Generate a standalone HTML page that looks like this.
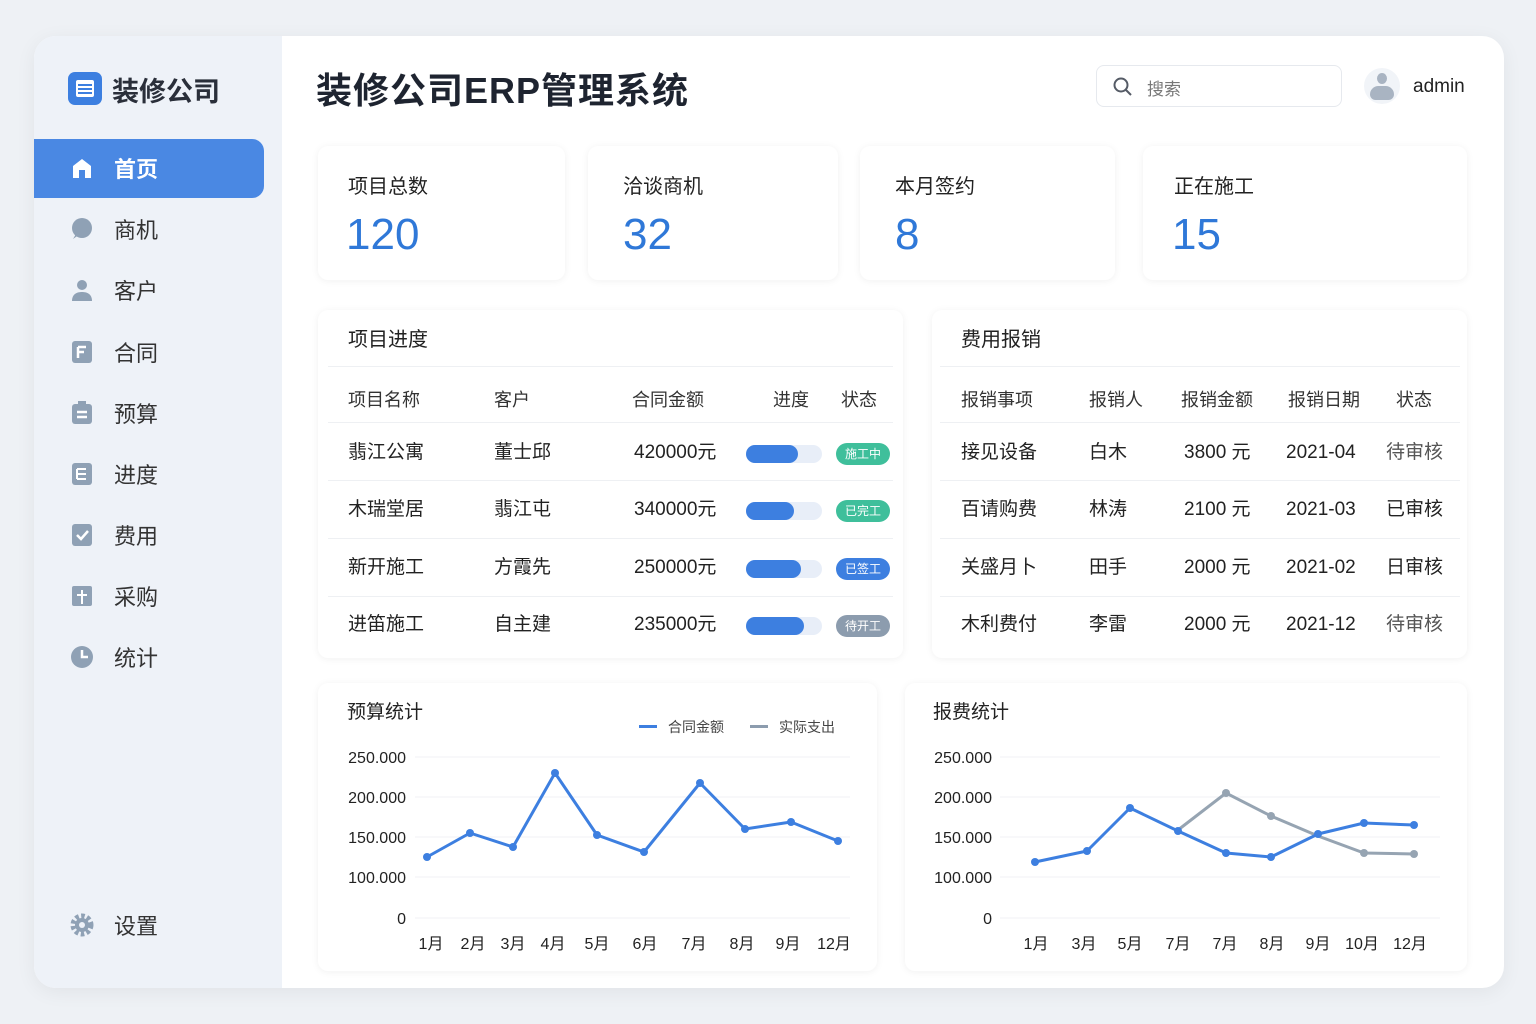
<!DOCTYPE html>
<html><head><meta charset="utf-8"><style>
*{margin:0;padding:0;box-sizing:border-box}
body{width:1536px;height:1024px;background:#eef1f5;font-family:"Liberation Sans","Noto Sans CJK SC",sans-serif;color:#222;position:relative;overflow:hidden}
.a{position:absolute}
.card{position:absolute;left:34px;top:36px;width:1470px;height:952px;background:#fff;border-radius:22px;box-shadow:0 4px 20px rgba(0,0,0,.06);overflow:hidden}
.side{position:absolute;left:0;top:0;width:248px;height:952px;background:#eef2f8}
.nav{position:absolute;left:0;width:230px;height:58px;font-size:22px;color:#333;display:flex;align-items:center}
.nav .ic{position:absolute;left:36px;top:17px;width:24px;height:24px}
.nav span{position:absolute;left:80px}
.box{position:absolute;background:#fff;border-radius:10px;box-shadow:0 1px 8px rgba(0,0,0,.06)}
.lbl{position:absolute;font-size:20px;color:#222}
.num{position:absolute;font-size:44px;color:#2f78d8;font-weight:500}
.t{position:absolute;font-size:19px;color:#222;white-space:nowrap;line-height:24px}
.h{position:absolute;font-size:18px;color:#333;white-space:nowrap}
.bar{position:absolute;width:76px;height:18px;border-radius:9px;background:#e8eef8}
.bar i{display:block;height:18px;border-radius:9px;background:#3d7fe0}
.tag{position:absolute;width:54px;height:22px;border-radius:11px;color:#fff;font-size:12px;text-align:center;line-height:22px}
.line{position:absolute;height:1px;background:#eef0f3}
</style></head><body>
<div class="card">
 <div class="side">
  <div class="a" style="left:34px;top:36px;width:34px;height:33px;border-radius:7px;background:#3c7fe0">
   <div class="a" style="left:8px;top:8px;width:18px;height:17px;border:2px solid #fff;border-radius:2px;background:repeating-linear-gradient(#fff 0 2px,transparent 2px 4px)"></div></div>
  <div class="a" style="left:78px;top:34px;font-size:27px;font-weight:600;color:#2a2f3a">装修公司</div>
  <div class="a" style="left:0;top:103px;width:230px;height:59px;background:#4a88e3;border-radius:0 12px 12px 0"></div>
  <div class="nav" style="top:103px;color:#fff;font-weight:700"><svg class="ic" viewBox="0 0 24 24"><path d="M3 10L12 3L21 10V22H15V14H9V22H3Z" fill="#fff"/></svg><span>首页</span></div>
  <div class="nav" style="top:164px"><svg class="ic" viewBox="0 0 24 24"><circle cx="12" cy="11" r="10" fill="#8fa1b5"/><path d="M3 22l3-5h4z" fill="#8fa1b5"/></svg><span>商机</span></div>
  <div class="nav" style="top:225px"><svg class="ic" viewBox="0 0 24 24"><circle cx="12" cy="7" r="5" fill="#8fa1b5"/><path d="M2 23c0-7 5-9 10-9s10 2 10 9z" fill="#8fa1b5"/></svg><span>客户</span></div>
  <div class="nav" style="top:287px"><svg class="ic" viewBox="0 0 24 24"><rect x="2" y="1" width="20" height="22" rx="3" fill="#8fa1b5"/><path d="M8 7h8M8 12h6M8 7v11" stroke="#fff" stroke-width="2.5"/></svg><span>合同</span></div>
  <div class="nav" style="top:348px"><svg class="ic" viewBox="0 0 24 24"><rect x="2" y="3" width="20" height="20" rx="3" fill="#8fa1b5"/><rect x="8" y="0" width="8" height="5" fill="#8fa1b5"/><path d="M7 11h10M7 16h10" stroke="#fff" stroke-width="2.5"/></svg><span>预算</span></div>
  <div class="nav" style="top:409px"><svg class="ic" viewBox="0 0 24 24"><rect x="2" y="1" width="20" height="22" rx="3" fill="#8fa1b5"/><path d="M7 7h9M7 12h9M7 17h9M7 7v10" stroke="#fff" stroke-width="2"/></svg><span>进度</span></div>
  <div class="nav" style="top:470px"><svg class="ic" viewBox="0 0 24 24"><rect x="2" y="1" width="20" height="22" rx="3" fill="#8fa1b5"/><path d="M7 12l4 4 7-8" stroke="#fff" stroke-width="2.5" fill="none"/></svg><span>费用</span></div>
  <div class="nav" style="top:531px"><svg class="ic" viewBox="0 0 24 24"><rect x="2" y="2" width="20" height="20" rx="2" fill="#8fa1b5"/><path d="M12 6v14M7 11h10" stroke="#fff" stroke-width="2"/></svg><span>采购</span></div>
  <div class="nav" style="top:592px"><svg class="ic" viewBox="0 0 24 24"><circle cx="12" cy="12" r="11" fill="#8fa1b5"/><path d="M12 5v7h6" stroke="#fff" stroke-width="2.5" fill="none"/></svg><span>统计</span></div>
  <div class="nav" style="top:860px"><svg class="ic" viewBox="0 0 24 24"><circle cx="12" cy="12" r="9" fill="none" stroke="#8fa1b5" stroke-width="5" stroke-dasharray="3.5 2.4"/><circle cx="12" cy="12" r="7" fill="#8fa1b5"/><circle cx="12" cy="12" r="3" fill="#eef2f8"/></svg><span>设置</span></div>
 </div>
 <div class="a" style="left:282px;top:26px;font-size:36px;font-weight:700;color:#1e2430;letter-spacing:1px">装修公司ERP管理系统</div>
 <div class="a" style="left:1062px;top:29px;width:246px;height:42px;border:1px solid #e6e9ee;border-radius:8px">
  <svg class="a" style="left:16px;top:11px" width="20" height="20" viewBox="0 0 20 20"><circle cx="8" cy="8" r="6.5" fill="none" stroke="#555b66" stroke-width="2"/><path d="M13 13l5 5" stroke="#555b66" stroke-width="2"/></svg>
  <div class="a" style="left:50px;top:9px;font-size:17px;color:#777">搜索</div></div>
 <div class="a" style="left:1330px;top:32px;width:36px;height:36px;border-radius:50%;background:#f1f4f8;overflow:hidden">
  <div class="a" style="left:13px;top:5px;width:10px;height:11px;border-radius:50%;background:#a9b4c2"></div>
  <div class="a" style="left:6px;top:18px;width:24px;height:14px;border-radius:12px 12px 8px 8px;background:#a9b4c2"></div></div>
 <div class="a" style="left:1379px;top:40px;font-size:19px;color:#222">admin</div>

 <div class="box" style="left:284px;top:110px;width:247px;height:134px"><div class="lbl" style="left:30px;top:24px">项目总数</div><div class="num" style="left:28px;top:64px">120</div></div>
 <div class="box" style="left:554px;top:110px;width:250px;height:134px"><div class="lbl" style="left:35px;top:24px">洽谈商机</div><div class="num" style="left:35px;top:64px">32</div></div>
 <div class="box" style="left:826px;top:110px;width:255px;height:134px"><div class="lbl" style="left:35px;top:24px">本月签约</div><div class="num" style="left:35px;top:64px">8</div></div>
 <div class="box" style="left:1109px;top:110px;width:324px;height:134px"><div class="lbl" style="left:31px;top:24px">正在施工</div><div class="num" style="left:29px;top:64px">15</div></div>

 <div class="box" style="left:284px;top:274px;width:585px;height:348px">
  <div class="t" style="left:30px;top:18px;font-size:20px">项目进度</div>
  <div class="line" style="left:10px;top:56px;width:565px"></div>
  <div class="h" style="left:30px;top:76px">项目名称</div><div class="h" style="left:176px;top:76px">客户</div><div class="h" style="left:314px;top:76px">合同金额</div><div class="h" style="left:455px;top:76px">进度</div><div class="h" style="left:523px;top:76px">状态</div>
  <div class="line" style="left:10px;top:112px;width:565px"></div>
  <div class="t" style="left:30px;top:131px">翡江公寓</div><div class="t" style="left:176px;top:131px">董士邱</div><div class="t" style="left:316px;top:131px">420000元</div>
  <div class="bar" style="left:428px;top:135px"><i style="width:52px"></i></div><div class="tag" style="left:518px;top:133px;background:#3fbf9b">施工中</div>
  <div class="line" style="left:10px;top:170px;width:565px"></div>
  <div class="t" style="left:30px;top:188px">木瑞堂居</div><div class="t" style="left:176px;top:188px">翡江屯</div><div class="t" style="left:316px;top:188px">340000元</div>
  <div class="bar" style="left:428px;top:192px"><i style="width:48px"></i></div><div class="tag" style="left:518px;top:190px;background:#3fbf9b">已完工</div>
  <div class="line" style="left:10px;top:228px;width:565px"></div>
  <div class="t" style="left:30px;top:246px">新开施工</div><div class="t" style="left:176px;top:246px">方霞先</div><div class="t" style="left:316px;top:246px">250000元</div>
  <div class="bar" style="left:428px;top:250px"><i style="width:55px"></i></div><div class="tag" style="left:518px;top:248px;background:#3d7fe0">已签工</div>
  <div class="line" style="left:10px;top:286px;width:565px"></div>
  <div class="t" style="left:30px;top:303px">进笛施工</div><div class="t" style="left:176px;top:303px">自主建</div><div class="t" style="left:316px;top:303px">235000元</div>
  <div class="bar" style="left:428px;top:307px"><i style="width:58px"></i></div><div class="tag" style="left:518px;top:305px;background:#8c9cae">待开工</div>
 </div>

 <div class="box" style="left:898px;top:274px;width:535px;height:348px">
  <div class="t" style="left:29px;top:18px;font-size:20px">费用报销</div>
  <div class="line" style="left:8px;top:56px;width:520px"></div>
  <div class="h" style="left:29px;top:76px">报销事项</div><div class="h" style="left:157px;top:76px">报销人</div><div class="h" style="left:249px;top:76px">报销金额</div><div class="h" style="left:356px;top:76px">报销日期</div><div class="h" style="left:464px;top:76px">状态</div>
  <div class="line" style="left:8px;top:112px;width:520px"></div>
  <div class="t" style="left:29px;top:131px">接见设备</div><div class="t" style="left:157px;top:131px">白木</div><div class="t" style="left:252px;top:131px">3800 元</div><div class="t" style="left:354px;top:131px">2021-04</div><div class="t" style="left:454px;top:131px;color:#555">待审核</div>
  <div class="line" style="left:8px;top:170px;width:520px"></div>
  <div class="t" style="left:29px;top:188px">百请购费</div><div class="t" style="left:157px;top:188px">林涛</div><div class="t" style="left:252px;top:188px">2100 元</div><div class="t" style="left:354px;top:188px">2021-03</div><div class="t" style="left:454px;top:188px">已审核</div>
  <div class="line" style="left:8px;top:228px;width:520px"></div>
  <div class="t" style="left:29px;top:246px">关盛月卜</div><div class="t" style="left:157px;top:246px">田手</div><div class="t" style="left:252px;top:246px">2000 元</div><div class="t" style="left:354px;top:246px">2021-02</div><div class="t" style="left:454px;top:246px">日审核</div>
  <div class="line" style="left:8px;top:286px;width:520px"></div>
  <div class="t" style="left:29px;top:303px">木利费付</div><div class="t" style="left:157px;top:303px">李雷</div><div class="t" style="left:252px;top:303px">2000 元</div><div class="t" style="left:354px;top:303px">2021-12</div><div class="t" style="left:454px;top:303px;color:#555">待审核</div>
 </div>

 <div class="box" style="left:284px;top:647px;width:559px;height:288px">
  <div class="t" style="left:29px;top:18px;font-size:19px">预算统计</div>
  <div class="a" style="left:321px;top:42px;width:18px;height:3px;background:#3d7fe0"></div><div class="a" style="left:350px;top:34px;font-size:14px;color:#444">合同金额</div>
  <div class="a" style="left:432px;top:42px;width:18px;height:3px;background:#8c9cae"></div><div class="a" style="left:461px;top:34px;font-size:14px;color:#444">实际支出</div>
 </div>
 <div class="box" style="left:871px;top:647px;width:562px;height:288px">
  <div class="t" style="left:28px;top:18px;font-size:19px">报费统计</div>
 </div>
 <svg class="a" style="left:0;top:0" width="1470" height="952" font-family="Liberation Sans,Noto Sans CJK SC,sans-serif" font-size="16" fill="#222">
  <g transform="translate(-34,-36)">
   <g stroke="#f0f2f5"><path d="M415 757H850M415 797H850M415 837H850M415 877H850M415 918H850M1000 757H1440M1000 797H1440M1000 837H1440M1000 877H1440M1000 918H1440"/></g>
   <g text-anchor="end"><text x="406" y="763">250.000</text><text x="406" y="803">200.000</text><text x="406" y="843">150.000</text><text x="406" y="883">100.000</text><text x="406" y="924">0</text>
   <text x="992" y="763">250.000</text><text x="992" y="803">200.000</text><text x="992" y="843">150.000</text><text x="992" y="883">100.000</text><text x="992" y="924">0</text></g>
   <g text-anchor="middle"><text x="431" y="949">1月</text><text x="473" y="949">2月</text><text x="513" y="949">3月</text><text x="553" y="949">4月</text><text x="597" y="949">5月</text><text x="645" y="949">6月</text><text x="694" y="949">7月</text><text x="742" y="949">8月</text><text x="788" y="949">9月</text><text x="834" y="949">12月</text>
   <text x="1036" y="949">1月</text><text x="1084" y="949">3月</text><text x="1130" y="949">5月</text><text x="1178" y="949">7月</text><text x="1225" y="949">7月</text><text x="1272" y="949">8月</text><text x="1318" y="949">9月</text><text x="1362" y="949">10月</text><text x="1410" y="949">12月</text></g>
   <polyline points="427,857 470,833 513,847 555,773 597,835 644,852 700,783 745,829 791,822 838,841" fill="none" stroke="#3d7fe0" stroke-width="3" stroke-linejoin="round"/>
   <g fill="#3d7fe0"><circle cx="427" cy="857" r="4"/><circle cx="470" cy="833" r="4"/><circle cx="513" cy="847" r="4"/><circle cx="555" cy="773" r="4"/><circle cx="597" cy="835" r="4"/><circle cx="644" cy="852" r="4"/><circle cx="700" cy="783" r="4"/><circle cx="745" cy="829" r="4"/><circle cx="791" cy="822" r="4"/><circle cx="838" cy="841" r="4"/></g>
   <polyline points="1178,830 1226,793 1271,816 1318,836 1364,853 1414,854" fill="none" stroke="#96a4b2" stroke-width="3"/>
   <g fill="#96a4b2"><circle cx="1226" cy="793" r="4"/><circle cx="1271" cy="816" r="4"/><circle cx="1364" cy="853" r="4"/><circle cx="1414" cy="854" r="4"/></g>
   <polyline points="1035,862 1087,851 1130,808 1178,831 1226,853 1271,857 1318,834 1364,823 1414,825" fill="none" stroke="#3d7fe0" stroke-width="3" stroke-linejoin="round"/>
   <g fill="#3d7fe0"><circle cx="1035" cy="862" r="4"/><circle cx="1087" cy="851" r="4"/><circle cx="1130" cy="808" r="4"/><circle cx="1178" cy="831" r="4"/><circle cx="1226" cy="853" r="4"/><circle cx="1271" cy="857" r="4"/><circle cx="1318" cy="834" r="4"/><circle cx="1364" cy="823" r="4"/><circle cx="1414" cy="825" r="4"/></g>
  </g>
 </svg>
</div>
</body></html>
